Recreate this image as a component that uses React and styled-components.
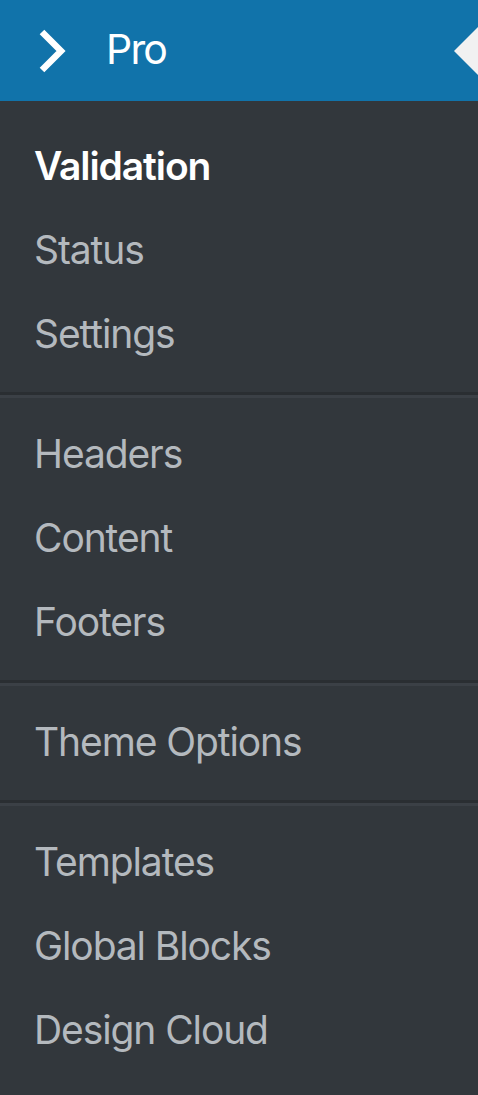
import React from "react";
import styled, { createGlobalStyle } from "styled-components";

const Global = createGlobalStyle`
  html, body { margin: 0; padding: 0; background: #32373c; }
  body { font-family: Inter, "Noto Sans", sans-serif; -webkit-font-smoothing: antialiased; }
`;

const Menu = styled.nav`
  width: 478px;
  min-height: 1095px;
  background: #32373c;
  overflow: hidden;
`;

const Header = styled.div`
  position: relative;
  height: 101px;
  background: #1173aa;
  display: flex;
  align-items: center;
  padding-left: 38px;
  box-sizing: border-box;
  color: #fff;
`;

const HeaderTitle = styled.span`
  font-size: 41px;
  font-weight: 400;
  margin-left: 38px;
  letter-spacing: -1.8px;
  line-height: 1;
  padding-bottom: 2px;
`;

const Pointer = styled.span`
  position: absolute;
  right: 0;
  top: 27px;
  width: 0;
  height: 0;
  border-top: 24px solid transparent;
  border-bottom: 24px solid transparent;
  border-right: 24px solid #f1f1f1;
`;

const Group = styled.ul`
  list-style: none;
  margin: 0;
  padding: ${(p) => p.$top}px 0 ${(p) => p.$bottom}px;
`;

const Item = styled.li`
  height: 84px;
  display: flex;
  align-items: center;
  padding-left: 34px;
  font-size: 39px;
  letter-spacing: -1.1px;
  color: ${(p) => (p.$current ? "#ffffff" : "#b4b9be")};
  font-weight: ${(p) => (p.$current ? 600 : 400)};
  white-space: nowrap;
  padding-bottom: 1px;
  box-sizing: border-box;
`;

const Separator = styled.hr`
  margin: 0;
  border: 0;
  height: 3px;
  background: #2a2e32;
  border-bottom: 3px solid #3b4046;
`;

const Chevron = () => (
  <svg width="30" height="46" viewBox="0 0 30 46" aria-hidden="true">
    <polyline
      points="4,4 23,23 4,42"
      fill="none"
      stroke="#fff"
      strokeWidth="6.5"
      strokeLinejoin="miter"
    />
  </svg>
);

const groups = [
  { top: 23, bottom: 16, items: ["Validation", "Status", "Settings"] },
  { top: 14, bottom: 16, items: ["Headers", "Content", "Footers"] },
  { top: 14, bottom: 16, items: ["Theme Options"] },
  { top: 14, bottom: 23, items: ["Templates", "Global Blocks", "Design Cloud"] },
];

export default function App() {
  return (
    <>
      <Global />
      <Menu>
        <Header>
          <Chevron />
          <HeaderTitle>Pro</HeaderTitle>
          <Pointer />
        </Header>
        {groups.map((g, gi) => (
          <React.Fragment key={gi}>
            {gi > 0 && <Separator />}
            <Group $top={g.top} $bottom={g.bottom}>
              {g.items.map((it) => (
                <Item key={it} $current={it === "Validation"}>
                  {it}
                </Item>
              ))}
            </Group>
          </React.Fragment>
        ))}
      </Menu>
    </>
  );
}
